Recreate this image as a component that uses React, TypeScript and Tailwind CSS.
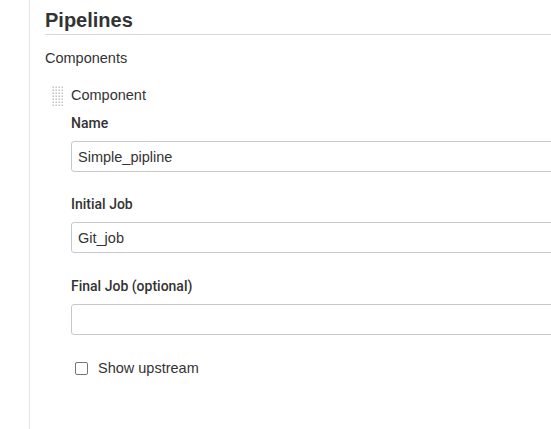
import React from 'react';

const font = { fontFamily: '"Liberation Sans", Arial, Helvetica, sans-serif' };
const labelFont = { fontFamily: 'Roboto, "Liberation Sans", Arial, sans-serif' };

const DragHandle = () => (
  <svg width="12" height="21" viewBox="0 0 12 21" className="shrink-0">
    {Array.from({ length: 7 }).map((_, r) =>
      Array.from({ length: 4 }).map((_, c) => (
        <rect key={`${r}-${c}`} x={c * 3 + 0.5} y={r * 3 + 0.5} width="1.4" height="1.4" fill="#b9b9b9" />
      ))
    )}
  </svg>
);

const Field = ({ label, value, gap }: { label: string; value: string; gap: string }) => (
  <div className={gap}>
    <div className="text-[14px] leading-[20px] font-medium text-[#333]" style={labelFont}>
      {label}
    </div>
    <input
      readOnly
      value={value}
      className="mt-[8px] block w-[600px] h-[31px] border border-[#c8c8c8] rounded-[3px] px-[6px] text-[14.5px] text-[#333] bg-white outline-none"
      style={font}
    />
  </div>
);

export default function App() {
  return (
    <div className="w-[551px] h-[429px] overflow-hidden bg-white flex text-[#333]" style={font}>
      {/* side panel edge */}
      <div className="w-[30px] shrink-0 border-r border-[#e6e6e6]" />

      <div className="flex-1 pl-[15px] min-w-0">
        <h1 className="pt-[8px] pb-[2px] text-[20px] leading-[24px] font-bold border-b border-[#d9d9d9] text-[#333]">
          Pipelines
        </h1>

        <div className="mt-[13px] text-[14.5px] leading-[20px]">Components</div>

        <div className="mt-[17px] flex items-start">
          <div className="pt-[1px] pl-[7px] w-[26px]">
            <DragHandle />
          </div>
          <div className="flex-1 min-w-0">
            <div className="text-[14.5px] leading-[20px]">Component</div>
            <Field label="Name" value="Simple_pipline" gap="mt-[8px]" />
            <Field label="Initial Job" value="Git_job" gap="mt-[22px]" />
            <Field label="Final Job (optional)" value="" gap="mt-[23px]" />

            <label className="mt-[23px] ml-[4px] flex items-center gap-[10px] text-[14.5px] leading-[20px]">
              <span className="w-[13px] h-[13px] border border-[#767676] rounded-[2px] bg-white shrink-0" />
              Show upstream
            </label>
          </div>
        </div>
      </div>
    </div>
  );
}
